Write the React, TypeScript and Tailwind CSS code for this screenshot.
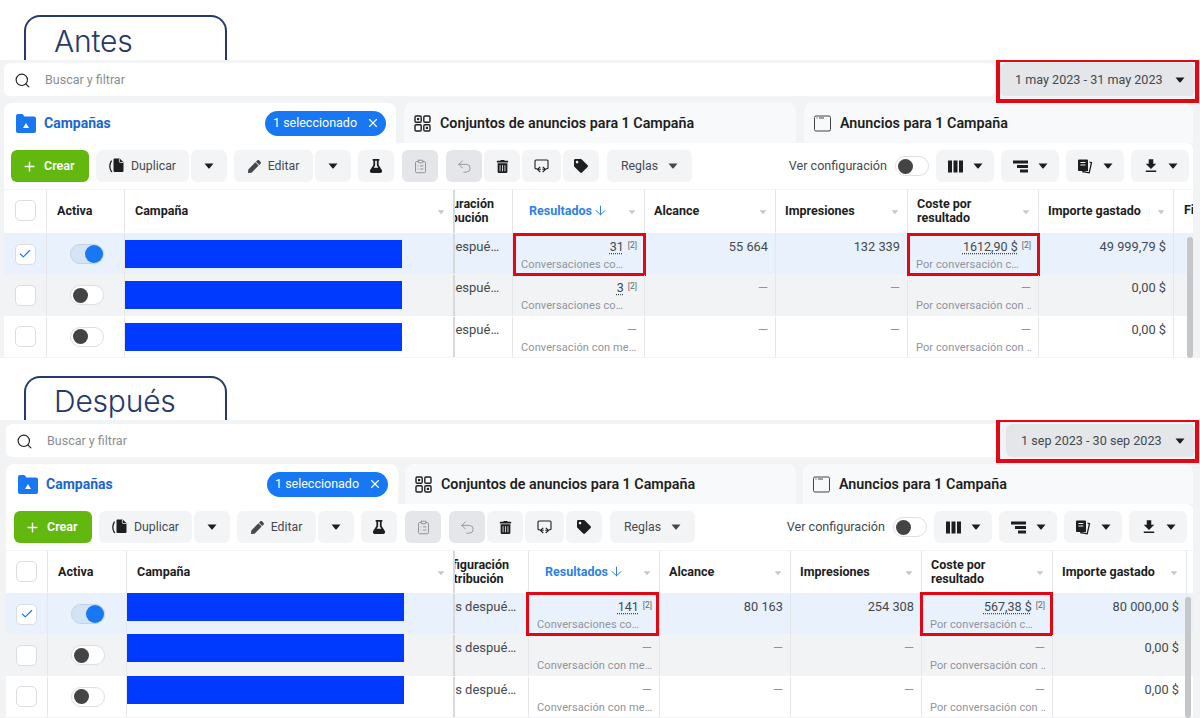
import React from "react";
import { ArrowDown, ClipboardList, Plus, Search, Undo2, X, Check } from "lucide-react";
import { FaFlask, FaPen, FaTag, FaTrashAlt } from "react-icons/fa";
import { MdFileDownload } from "react-icons/md";

interface RowData {
  checked?: boolean;
  attribution: string;
  result: string;
  resultNote: string;
  reach: string;
  impressions: string;
  cost: string;
  costNote: string;
  spent: string;
}

interface PanelProps {
  title: string;
  dateRange: string;
  frame: string;
  dateWidth: string;
  gridCols: string;
  pad: string;
  attrOffset: string;
  rowOffset: string;
  titleHeight: string;
  panelTop: string;
  tabGap: string;
  midTab: string;
  toolbarPad: string;
  rowsShift: string;
  barShift: string;
  scrollRight: string;
  resultBox: string;
  costBox: string;
  showFin?: boolean;
  rows: RowData[];
}

const Caret = ({ className = "" }: { className?: string }) => (
  <svg width="10" height="6" viewBox="0 0 10 6" className={"shrink-0 " + className}>
    <path d="M0.5 0.5h9L5.6 5.2a.8.8 0 0 1-1.2 0z" fill="currentColor" />
  </svg>
);

const FolderIcon = () => (
  <svg width="20" height="19" viewBox="0 0 20 19">
    <path d="M0 2a2 2 0 0 1 2-2h4.5l2 2.6H18a2 2 0 0 1 2 2V17a2 2 0 0 1-2 2H2a2 2 0 0 1-2-2z" fill="#1877f2" />
    <path d="M10 9l3 5H7z" fill="#fff" />
  </svg>
);

const AdSetIcon = () => (
  <svg width="17" height="17" viewBox="0 0 17 17" fill="none" stroke="#1c1e21" strokeWidth="1.4">
    <rect x="1" y="1" width="6.2" height="6.2" rx="1.2" />
    <rect x="9.8" y="1" width="6.2" height="6.2" rx="1.2" />
    <rect x="1" y="9.8" width="6.2" height="6.2" rx="1.2" />
    <rect x="9.8" y="9.8" width="6.2" height="6.2" rx="1.2" />
    <rect x="3" y="3" width="2.2" height="2.2" fill="#1c1e21" stroke="none" />
    <rect x="11.8" y="11.8" width="2.2" height="2.2" fill="#1c1e21" stroke="none" />
  </svg>
);

const AdIcon = () => (
  <svg width="17" height="17" viewBox="0 0 17 17" fill="none" stroke="#444" strokeWidth="1">
    <rect x="0.5" y="1" width="16" height="15" rx="1.5" />
    <path d="M2.5 3h1M5 3h5" />
  </svg>
);

const DuplicateIcon = () => (
  <svg width="16" height="16" viewBox="0 0 16 16" fill="#1c1e21">
    <path d="M5.5 0.5h5.2l3.8 3.8V13a1 1 0 0 1-1 1H5.5a1 1 0 0 1-1-1V1.5a1 1 0 0 1 1-1z" />
    <path d="M2.6 2.6C1.2 4.5.8 6.5.8 8.2s.4 3.7 1.8 5.6l-.1 .1" fill="none" stroke="#1c1e21" strokeWidth="1.3" />
    <path d="M10.4 0.6v3.2a.7.7 0 0 0 .7.7h3.3" fill="none" stroke="#f3f4f6" strokeWidth=".8" />
  </svg>
);

const SwapIcon = () => (
  <svg width="15" height="15" viewBox="0 0 15 15" fill="none" stroke="#1c1e21" strokeWidth="1.1">
    <path d="M3 9.8H2a1 1 0 0 1-1-1V2a1 1 0 0 1 1-1h11a1 1 0 0 1 1 1v6.8a1 1 0 0 1-1 1h-1" />
    <path d="M6.3 7.8L3.4 10.3l2.9 2.7M3.6 10.3h3.2" />
    <path d="M8.7 7.8l2.9 2.5-2.9 2.7M11.4 10.3H8.2" />
  </svg>
);

const ColumnsIcon = () => (
  <svg width="15" height="13" viewBox="0 0 15 13" fill="#1c1e21">
    <rect x="0" y="0.5" width="4" height="12" />
    <rect x="5.5" y="0.5" width="4" height="12" />
    <rect x="11" y="0.5" width="4" height="12" />
  </svg>
);

const BreakdownIcon = () => (
  <svg width="15" height="13" viewBox="0 0 15 13" fill="#1c1e21">
    <rect x="0" y="0.5" width="15" height="3" />
    <rect x="4" y="5" width="11" height="3" />
    <rect x="7" y="9.5" width="8" height="3" />
  </svg>
);

const ReportIcon = () => (
  <svg width="16" height="15" viewBox="0 0 16 15">
    <path d="M1 1.5a1 1 0 0 1 1-1h8a1 1 0 0 1 1 1V12H2a1 1 0 0 1-1-1z" fill="#1c1e21" />
    <path d="M3.4 3.5h5M3.4 6h5" stroke="#f3f4f6" strokeWidth="1" />
    <path d="M12.5 3l2 .6-2.3 10.2-7-1.3" fill="none" stroke="#1c1e21" strokeWidth="1.3" />
  </svg>
);

const Btn = ({
  children,
  className = "",
}: {
  children: React.ReactNode;
  className?: string;
}) => (
  <div
    className={
      "h-8 rounded-md bg-[#f3f4f6] flex items-center justify-center shrink-0 text-[#1c1e21] " + className
    }
  >
    {children}
  </div>
);

const Box = ({ className = "", checked }: { className?: string; checked?: boolean }) => (
  <div
    className={
      "w-[21px] h-[21px] rounded-[5px] border border-[#dadde1] bg-white flex items-center justify-center " + className
    }
  >
    {checked && <Check size={14} strokeWidth={2} className="text-[#1877f2]" />}
  </div>
);

const Toggle = ({ on }: { on?: boolean }) =>
  on ? (
    <div className="w-[34px] h-5 rounded-full bg-[#d5e3f6] border border-[#c3d3e8] flex items-center justify-end">
      <div className="w-[18px] h-[18px] rounded-full bg-[#1877f2]" />
    </div>
  ) : (
    <div className="w-[34px] h-5 rounded-full bg-white border border-[#dedfe2] flex items-center pl-[2px]">
      <div className="w-[15px] h-[15px] rounded-full bg-[#444]" />
    </div>
  );

const HeadCell = ({
  children,
  className = "",
}: {
  children: React.ReactNode;
  className?: string;
}) => (
  <div
    className={
      "h-full border-r border-[#e4e6e9] flex items-center relative pb-[2px] text-[12.5px] leading-[14px] font-bold text-[#1c1e21] " +
      className
    }
  >
    {children}
  </div>
);

const SortCaret = () => <Caret className="absolute right-[7px] top-[19px] text-[#c6c8cc] scale-75" />;

const Metric = ({ value, note, box }: { value: string; note: string; box?: string }) => (
  <div className="relative h-full border-r border-[#e4e6e9] pl-2 pr-[7px] pt-[5px]">
    <div className="flex justify-end items-start gap-1 h-[16px]">
      {value === "—" ? (
        <span className="text-[13px] leading-4 text-[#8d949e]">—</span>
      ) : (
        <>
          <span className="text-[12.5px] leading-4 text-[#444950] underline decoration-dotted underline-offset-2">
            {value}
          </span>
          <span className="text-[8.5px] leading-3 text-[#606770]">[2]</span>
        </>
      )}
    </div>
    <div className="mt-[3px] text-[11px] leading-[14px] text-[#90949c] tracking-[0.1px] whitespace-nowrap overflow-hidden">
      {note}
    </div>
    {box && <div className={"absolute border-[3px] border-[#e30613] " + box} />}
  </div>
);

const Plain = ({ value }: { value: string }) => (
  <div className="h-full border-r border-[#e4e6e9] px-[7px] pt-[5px] text-right text-[12.8px] leading-4 text-[#444950]">
    {value === "—" ? <span className="text-[#8d949e]">—</span> : value}
  </div>
);

const Panel = ({
  title,
  dateRange,
  frame,
  dateWidth,
  gridCols,
  pad,
  attrOffset,
  rowOffset,
  titleHeight,
  panelTop,
  tabGap,
  midTab,
  toolbarPad,
  rowsShift,
  barShift,
  scrollRight,
  resultBox,
  costBox,
  showFin,
  rows,
}: PanelProps) => (
  <section>
    <div
      className={
        "ml-6 w-[203px] rounded-t-[16px] border-2 border-b-0 border-[#27386a] pl-[28px] pt-[5px] flex items-center text-[30px] tracking-[-0.2px] font-light text-[#27386a] " +
        titleHeight
      }
      style={{ fontFamily: "Inter, sans-serif" }}
    >
      {title}
    </div>
    <div className={"relative h-[298px] overflow-hidden bg-[#f2f3f5] " + pad + " " + panelTop}>
      {/* search + date */}
      <div className="flex h-[33px] gap-[5px] pr-[5px]">
        <div className="flex-1 rounded-md bg-white flex items-center pl-[10px] pt-px text-[12.5px] text-[#8a8d91]">
          <Search size={17} strokeWidth={1.6} className="text-[#1c1e21] mr-[14px]" />
          Buscar y filtrar
        </div>
        <div
          className={
            "relative h-full rounded-md bg-[#e4e6e9] flex items-center justify-between pl-[15px] pr-[10px] pt-px text-[12.6px] text-[#444950] " +
            dateWidth
          }
        >
          <span>{dateRange}</span>
          <Caret className="text-[#1c1e21]" />
          <div className={"absolute border-[4px] border-[#e30613] " + frame} />
        </div>
      </div>

      {/* level tabs */}
      <div className={"mt-[7px] flex h-10 pr-[7px] " + tabGap}>
        <div className="w-[392px] rounded-t-lg bg-white flex items-center pl-[12px] pr-[10px]">
          <FolderIcon />
          <span className="ml-[8px] text-[14px] font-bold text-[#1a66cf]">Campañas</span>
          <div className="ml-auto h-[25px] w-[121px] rounded-full bg-[#1877f2] flex items-center pl-2 pr-[6px] justify-between text-[12.5px] text-white">
            1 seleccionado
            <X size={14} strokeWidth={2} />
          </div>
        </div>
        <div
          className={
            "rounded-t-lg bg-[#f8f9fa] flex items-center pl-[10px] pt-px gap-[9px] text-[14.3px] font-semibold text-[#1c1e21] " +
            midTab
          }
        >
          <AdSetIcon />
          Conjuntos de anuncios para 1 Campaña
        </div>
        <div className="flex-1 rounded-t-lg bg-[#f8f9fa] flex items-center pl-[10px] pt-px gap-[9px] text-[14.3px] font-semibold text-[#1c1e21]">
          <AdIcon />
          Anuncios para 1 Campaña
        </div>
      </div>

      {/* toolbar */}
      <div className={"mr-[7px] h-[46px] bg-white flex items-center rounded-tr-md " + toolbarPad}>
        <Btn className="w-[78px] !bg-[#63b80f] !justify-start pl-[11px] text-white text-[12.5px] font-semibold gap-[7px] mr-[7px]">
          <Plus size={15} strokeWidth={2.2} />
          Crear
        </Btn>
        <Btn className="w-[93px] gap-[6px] text-[12.3px] text-[#444950] mr-[2px]">
          <DuplicateIcon />
          Duplicar
        </Btn>
        <Btn className="w-9 mr-[7px]">
          <Caret />
        </Btn>
        <Btn className="w-[79px] gap-[7px] text-[12.3px] text-[#444950] mr-[2px]">
          <FaPen size={13} />
          Editar
        </Btn>
        <Btn className="w-9 mr-[7px]">
          <Caret />
        </Btn>
        <Btn className="w-9 mr-2">
          <FaFlask size={14} />
        </Btn>
        <Btn className="w-9 !bg-[#e4e6e9] mr-2">
          <ClipboardList size={15} strokeWidth={1.5} className="text-[#8a8d91]" />
        </Btn>
        <Btn className="w-9 !bg-[#e4e6e9] mr-[2px]">
          <Undo2 size={17} strokeWidth={1.2} className="text-[#8a8d91]" />
        </Btn>
        <Btn className="w-9 mr-[2px]">
          <FaTrashAlt size={13} />
        </Btn>
        <Btn className="w-[39px] mr-[2px]">
          <SwapIcon />
        </Btn>
        <Btn className="w-9 mr-2">
          <FaTag size={14} />
        </Btn>
        <Btn className="w-[85px] gap-[10px] text-[12.3px] text-[#444950]">
          Reglas
          <Caret />
        </Btn>
        <div className="ml-auto flex items-center">
          <span className="text-[12.6px] text-[#444950] mr-[8px]">Ver configuración</span>
          <Toggle />
          <Btn className="w-[58px] gap-[10px] ml-[7px]">
            <ColumnsIcon />
            <Caret />
          </Btn>
          <Btn className="w-[58px] gap-[10px] ml-[7px]">
            <BreakdownIcon />
            <Caret />
          </Btn>
          <Btn className="w-[58px] gap-[10px] ml-[7px]">
            <ReportIcon />
            <Caret />
          </Btn>
          <Btn className="w-[58px] gap-[8px] ml-[7px]">
            <MdFileDownload size={18} />
            <Caret />
          </Btn>
        </div>
      </div>

      {/* table */}
      <div className="mt-px mr-[7px] bg-white">
        <div className={"relative z-10 grid h-[43px] " + gridCols}>
          <HeadCell className="justify-center">
            <Box />
          </HeadCell>
          <HeadCell className="pl-[10px]">Activa</HeadCell>
          <HeadCell className="pl-[10px] border-r-[2px] !border-[#d8d9dc]">
            Campaña
            <SortCaret />
          </HeadCell>
          <HeadCell className="overflow-hidden">
            <div className={"whitespace-nowrap " + attrOffset}>
              Configuración
              <br />
              de atribución
            </div>
          </HeadCell>
          <HeadCell className="pl-4 !text-[#2f7fe6] gap-[1px]">
            Resultados
            <ArrowDown size={15} strokeWidth={1.6} />
            <SortCaret />
          </HeadCell>
          <HeadCell className="pl-[9px]">
            Alcance
            <SortCaret />
          </HeadCell>
          <HeadCell className="pl-[9px]">
            Impresiones
            <SortCaret />
          </HeadCell>
          <HeadCell className="pl-[9px]">
            <span>
              Coste por
              <br />
              resultado
            </span>
            <SortCaret />
          </HeadCell>
          <HeadCell className="pl-[9px]">
            Importe gastado
            <SortCaret />
          </HeadCell>
          {showFin ? (
            <div className="pl-[10px] pb-[2px] flex items-center text-[12.5px] font-bold text-[#1c1e21] overflow-hidden">
              Fin
            </div>
          ) : (
            <div />
          )}
        </div>

        <div className={"relative z-20 " + rowsShift}>
          {rows.map((row, i) => (
            <div
              key={i}
              className={
                "grid h-[41.3px] border-t border-transparent " +
                gridCols +
                " " +
                (row.checked ? "bg-[#e8f1fc]" : i === 1 ? "bg-[#f2f3f5]" : "bg-white")
              }
            >
              <div className="h-full border-r border-[#e4e6e9] flex items-center justify-center">
                <Box checked={row.checked} />
              </div>
              <div className="h-full border-r border-[#e4e6e9] flex items-center justify-center pl-[2px]">
                <Toggle on={row.checked} />
              </div>
              <div className="h-full flex items-center border-r-[2px] border-[#d8d9dc]">
                <div className={"h-7 w-[277px] bg-[#0039ff] " + barShift} />
              </div>
              <div className="h-full border-r border-[#e4e6e9] overflow-hidden pt-[5px]">
                <div className={"whitespace-nowrap text-[13px] leading-4 text-[#444950] " + rowOffset}>
                  {row.attribution}
                </div>
              </div>
              <Metric value={row.result} note={row.resultNote} box={row.checked ? resultBox : undefined} />
              <Plain value={row.reach} />
              <Plain value={row.impressions} />
              <Metric value={row.cost} note={row.costNote} box={row.checked ? costBox : undefined} />
              <Plain value={row.spent} />
              <div />
            </div>
          ))}
        </div>
      </div>

      {/* scrollbar */}
      <div className={"absolute bottom-0 h-[121px] w-[6px] rounded-full bg-[#c4c6c9] z-30 " + scrollRight} />
    </div>
  </section>
);

const beforeRows: RowData[] = [
  {
    checked: true,
    attribution: "7 días despué…",
    result: "31",
    resultNote: "Conversaciones co…",
    reach: "55 664",
    impressions: "132 339",
    cost: "1612,90 $",
    costNote: "Por conversación c…",
    spent: "49 999,79 $",
  },
  {
    attribution: "7 días despué…",
    result: "3",
    resultNote: "Conversaciones co…",
    reach: "—",
    impressions: "—",
    cost: "—",
    costNote: "Por conversación con …",
    spent: "0,00 $",
  },
  {
    attribution: "7 días despué…",
    result: "—",
    resultNote: "Conversación con me…",
    reach: "—",
    impressions: "—",
    cost: "—",
    costNote: "Por conversación con …",
    spent: "0,00 $",
  },
];

const afterRows: RowData[] = [
  {
    checked: true,
    attribution: "7 días despué…",
    result: "141",
    resultNote: "Conversaciones co…",
    reach: "80 163",
    impressions: "254 308",
    cost: "567,38 $",
    costNote: "Por conversación c…",
    spent: "80 000,00 $",
  },
  {
    attribution: "7 días despué…",
    result: "—",
    resultNote: "Conversación con me…",
    reach: "—",
    impressions: "—",
    cost: "—",
    costNote: "Por conversación con …",
    spent: "0,00 $",
  },
  {
    attribution: "7 días despué…",
    result: "—",
    resultNote: "Conversación con me…",
    reach: "—",
    impressions: "—",
    cost: "—",
    costNote: "Por conversación con …",
    spent: "0,00 $",
  },
];

export default function App() {
  return (
    <div
      className="w-[1200px] h-[718px] overflow-hidden bg-white pt-[15px]"
      style={{ fontFamily: "Roboto, sans-serif" }}
    >
      <Panel
        title="Antes"
        dateRange="1 may 2023 - 31 may 2023"
        frame="-left-[4px] -right-[4px] -top-[5px] -bottom-[7px]"
        dateWidth="w-[195px]"
        gridCols="grid-cols-[43px_78px_330px_58px_132px_131px_132px_131px_135px_1fr]"
        pad="pl-[4px]"
        attrOffset="-ml-[40px]"
        rowOffset="-ml-[45px]"
        titleHeight="h-[45px]"
        panelTop="pt-[3px]"
        tabGap="gap-2"
        midTab="w-[392px]"
        toolbarPad="pl-[7px] pr-1"
        rowsShift=""
        barShift=""
        scrollRight="right-[7px]"
        resultBox="left-0 -right-[2px] -top-px -bottom-[2px]"
        costBox="-left-px -right-[2px] -top-px -bottom-[2px]"
        showFin
        rows={beforeRows}
      />
      <div className="h-[18px]" />
      <Panel
        title="Después"
        dateRange="1 sep 2023 - 30 sep 2023"
        frame="-left-[10px] -right-[4px] -top-[6px] -bottom-[6px]"
        dateWidth="w-[189px]"
        gridCols="grid-cols-[42px_79px_328px_74px_131px_131px_131px_131px_134px_1fr]"
        pad="pl-[6px]"
        attrOffset="-ml-[25px]"
        rowOffset="-ml-[28px]"
        titleHeight="h-[44px]"
        panelTop="pt-[4px]"
        tabGap="gap-[7px]"
        midTab="w-[391px]"
        toolbarPad="pl-[8px] pr-[6px]"
        rowsShift="-mt-px"
        barShift="-translate-y-[7px]"
        scrollRight="right-[9px]"
        resultBox="-left-[3px] right-0 -top-[2px] -bottom-[2px]"
        costBox="-left-[2px] -right-px -top-[2px] -bottom-[2px]"
        rows={afterRows}
      />
    </div>
  );
}
